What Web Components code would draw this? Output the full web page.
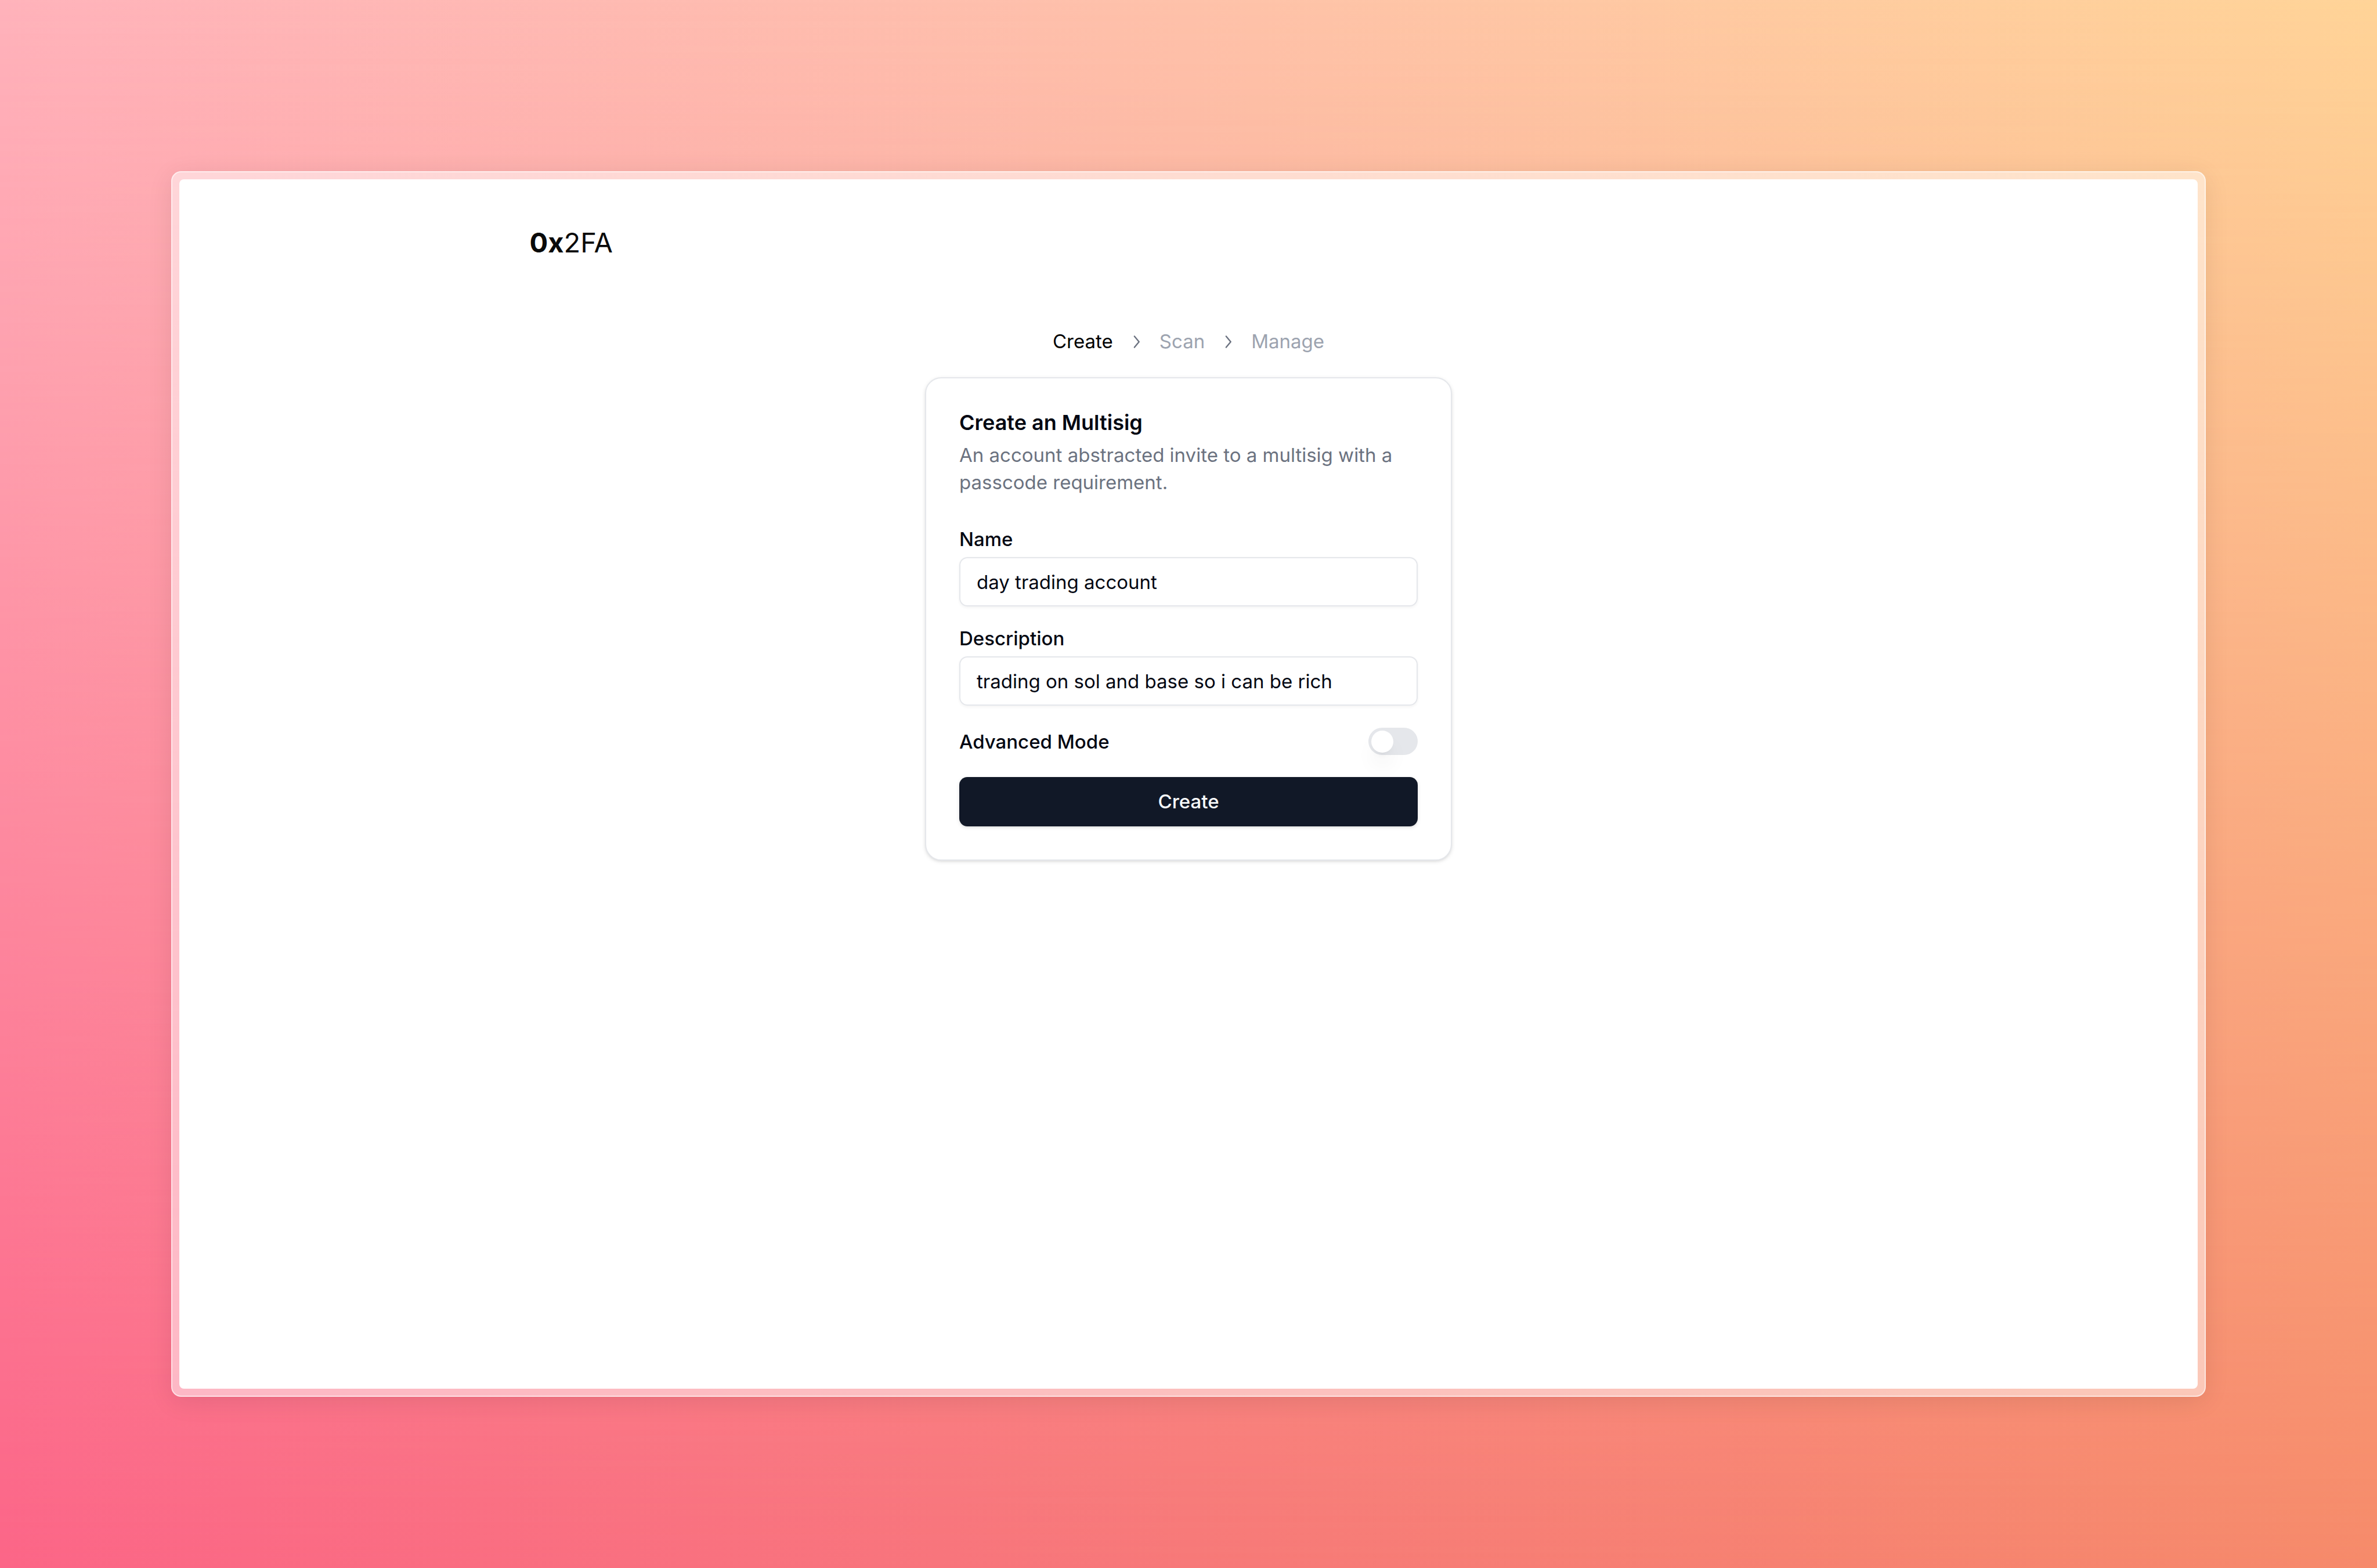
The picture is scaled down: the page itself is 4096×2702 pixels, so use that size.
<!DOCTYPE html>
<html lang="en">
<head>
<meta charset="utf-8">
<meta name="viewport" content="width=device-width, initial-scale=1">
<title>0x2FA</title>
<style>
  html { background: #fba; }
  body {
    margin: 0;
    font-family: Inter, "Liberation Sans", sans-serif;
    font-size: 33px;
    line-height: 47px;
    color: #030712;
    -webkit-font-smoothing: antialiased;
  }
</style>
</head>
<body>
<app-backdrop>
  <app-window>
    <site-header></site-header>
    <main>
      <step-trail></step-trail>
      <multisig-card heading="Create an Multisig">
        <span slot="summary">An account abstracted invite to a multisig with a passcode requirement.</span>
        <text-field label="Name" value="day trading account"></text-field>
        <text-field label="Description" value="trading on sol and base so i can be rich"></text-field>
        <toggle-field label="Advanced Mode"></toggle-field>
        <primary-button>Create</primary-button>
      </multisig-card>
    </main>
  </app-window>
</app-backdrop>

<script>
  const define = (name, html, setup) => {
    const template = document.createElement('template');
    template.innerHTML = html;
    customElements.define(name, class extends HTMLElement {
      constructor() {
        super();
        this.attachShadow({ mode: 'open' }).append(template.content.cloneNode(true));
      }
      connectedCallback() {
        if (setup) setup(this, this.shadowRoot);
      }
    });
  };

  define('app-backdrop', `
    <style>
      :host {
        display: flex;
        box-sizing: border-box;
        min-height: 100vh;
        padding: 295px;
        position: relative;
        z-index: 0;
        background: linear-gradient(90deg, #ffb3bb, #fec2aa 50%, #ffd498);
      }
      :host::before {
        content: "";
        position: absolute;
        inset: 0;
        z-index: -1;
        background: linear-gradient(90deg, #fc6587, #f77878 50%, #f68a6a);
        mask-image: linear-gradient(180deg, transparent, #000);
      }
    </style>
    <slot></slot>`);

  define('app-window', `
    <style>
      :host {
        display: flex;
        flex: 1;
        min-width: 0;
        box-sizing: border-box;
        padding: 12px;
        border: 2px solid rgba(255, 255, 255, .55);
        border-radius: 17px;
        background: rgba(255, 255, 255, .5);
        box-shadow: 0 8px 44px rgba(0, 0, 0, .09);
      }
      .screen {
        flex: 1;
        min-width: 0;
        border-radius: 8px;
        background: #fff;
      }
      ::slotted(main) {
        display: flex;
        flex-direction: column;
        align-items: center;
        gap: 38px;
        padding: 38px;
      }
    </style>
    <div class="screen"><slot></slot></div>`);

  define('site-header', `
    <style>
      :host {
        display: block;
        box-sizing: border-box;
        max-width: 2423px;
        margin: 0 auto;
        padding: 76px;
      }
      a {
        display: block;
        width: fit-content;
        font-size: 47px;
        line-height: 66px;
        font-weight: 400;
        color: #0a0a0a;
        text-decoration: none;
      }
      b { font-weight: 700; }
    </style>
    <a href="#"><b>0x</b>2FA</a>`);

  define('step-trail', `
    <style>
      :host { display: block; }
      ol {
        display: flex;
        align-items: center;
        gap: 21px;
        margin: 0;
        padding: 0;
        list-style: none;
      }
      li { display: flex; align-items: center; gap: 21px; }
      a { color: #9ca3af; text-decoration: none; }
      a[aria-current] { color: #000; }
      svg {
        width: 38px;
        height: 38px;
        fill: none;
        stroke: #6b7280;
        stroke-width: 1.5;
        stroke-linecap: round;
        stroke-linejoin: round;
      }
    </style>
    <nav aria-label="Steps">
      <ol>
        <li><a href="#create" aria-current="step">Create</a><svg viewBox="0 0 24 24" aria-hidden="true"><path d="m10 18 5-6-5-6"/></svg></li>
        <li><a href="#scan">Scan</a><svg viewBox="0 0 24 24" aria-hidden="true"><path d="m10 18 5-6-5-6"/></svg></li>
        <li><a href="#manage">Manage</a></li>
      </ol>
    </nav>`);

  define('multisig-card', `
    <style>
      :host {
        display: flex;
        flex-direction: column;
        gap: 57px;
        box-sizing: border-box;
        width: 100%;
        max-width: 908px;
        padding: 57px;
        border: 2px solid #e5e7eb;
        border-radius: 28px;
        background: #fff;
        box-shadow: 0 2px 7px rgba(0, 0, 0, .1), 0 2px 5px -2px rgba(0, 0, 0, .1);
      }
      header { display: flex; flex-direction: column; gap: 14px; }
      h1 {
        margin: 0;
        font-size: 36px;
        line-height: 38px;
        font-weight: 600;
      }
      p { margin: 0; color: #6b7280; }
      form { display: flex; flex-direction: column; gap: 38px; }
    </style>
    <header>
      <h1></h1>
      <p><slot name="summary"></slot></p>
    </header>
    <form><slot></slot></form>`,
    (host, root) => {
      root.querySelector('h1').textContent = host.getAttribute('heading');
    });

  define('text-field', `
    <style>
      :host { display: flex; flex-direction: column; gap: 14px; }
      label { line-height: 34px; font-weight: 500; }
      input {
        box-sizing: border-box;
        width: 100%;
        height: 85px;
        margin: 0;
        padding: 0 28px;
        border: 2px solid #e5e7eb;
        border-radius: 14px;
        background: transparent;
        box-shadow: 0 2px 5px rgba(0, 0, 0, .05);
        font: inherit;
        color: inherit;
      }
    </style>
    <label for="field"></label>
    <input id="field" type="text">`,
    (host, root) => {
      root.querySelector('label').textContent = host.getAttribute('label');
      root.querySelector('input').value = host.getAttribute('value');
    });

  define('toggle-field', `
    <style>
      :host { display: flex; align-items: center; justify-content: space-between; }
      label { line-height: 34px; font-weight: 500; }
      input {
        appearance: none;
        display: flex;
        align-items: center;
        box-sizing: border-box;
        width: 85px;
        height: 47px;
        margin: 0;
        padding: 0 5px;
        border-radius: 24px;
        background: #e5e7eb;
      }
      input::before {
        content: "";
        width: 38px;
        height: 38px;
        border-radius: 50%;
        background: #fff;
        box-shadow: 0 24px 36px -7px rgba(0, 0, 0, .1), 0 9px 14px -9px rgba(0, 0, 0, .1);
      }
      input:checked { justify-content: flex-end; background: #111827; }
    </style>
    <label for="toggle"></label>
    <input id="toggle" type="checkbox" role="switch">`,
    (host, root) => {
      root.querySelector('label').textContent = host.getAttribute('label');
    });

  define('primary-button', `
    <style>
      :host { display: block; }
      button {
        display: block;
        width: 100%;
        height: 85px;
        margin: 0;
        padding: 0 38px;
        border: 0;
        border-radius: 14px;
        background: #111827;
        box-shadow: 0 2px 7px rgba(0, 0, 0, .1), 0 2px 5px -2px rgba(0, 0, 0, .1);
        font: inherit;
        font-weight: 500;
        color: #f9fafb;
      }
    </style>
    <button type="button"><slot></slot></button>`);
</script>
</body>
</html>
